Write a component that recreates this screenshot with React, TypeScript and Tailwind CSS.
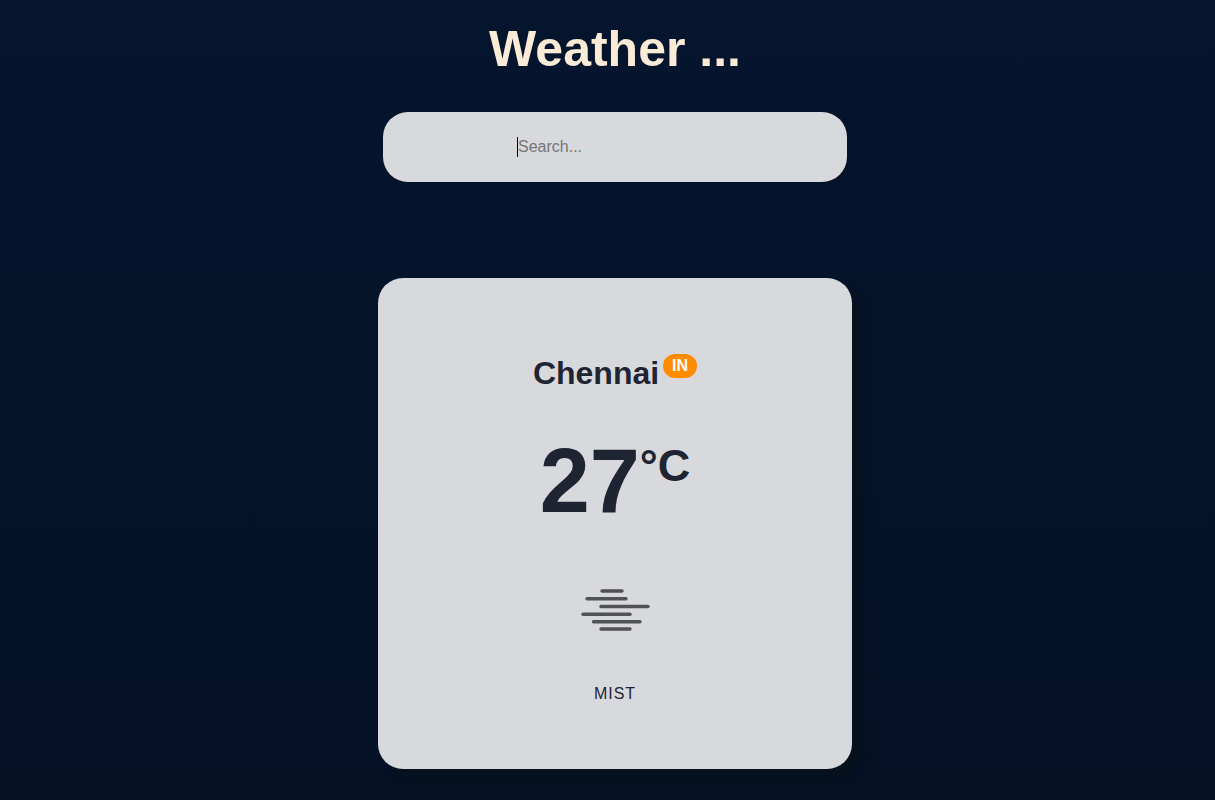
const mistBars = [
  [32, 53, 11],
  [17, 57, 18.8],
  [31, 79, 26.5],
  [13, 61, 34.2],
  [23.5, 71, 41.8],
  [31, 61, 49],
];

function MistIcon() {
  return (
    <svg width="92" height="60" viewBox="0 0 92 60" role="img" aria-label="Mist" className="block">
      {mistBars.map(([x1, x2, y]) => (
        <line key={y} x1={x1 + 1} x2={x2} y1={y} y2={y} stroke="#515256" strokeWidth="3.4" strokeLinecap="round" />
      ))}
    </svg>
  );
}

export default function App() {
  return (
    <div className="min-h-screen bg-linear-to-b from-[#05152e] to-[#051226] pl-[15px] font-['Liberation_Sans',Arial,sans-serif] text-[#1e2432]">
      <main className="flex flex-col items-center pt-[21px] pb-[31px]">
        <h1 className="text-[50px] leading-[56px] font-bold text-[#faebd7]">Weather ...</h1>
        <label className="mt-[35px] flex h-[70px] w-full max-w-[464px] items-center rounded-[25px] bg-[#d8d9dd] pr-6 pl-[134px] shadow-[5px_5px_10px_rgba(0,0,0,0.06)]">
          <span aria-hidden="true" className="h-5 w-px shrink-0 bg-black" />
          <input
            type="text"
            aria-label="Search for a city"
            placeholder="Search..."
            className="w-full min-w-0 bg-transparent text-base outline-none placeholder:text-[#757575]"
          />
        </label>
        <section className="mt-24 flex w-full max-w-[474px] flex-col items-center rounded-[25px] bg-[#d8d9dd] pt-[76px] pb-[63px] shadow-[10px_10px_10px_rgba(8,18,26,0.8)]">
          <h2 className="flex items-start text-[32px] leading-[38px] font-bold">
            <span>Chennai</span>
            <span className="ml-1 rounded-full bg-[#ff8c00] px-[9px] text-base leading-6 text-white">IN</span>
          </h2>
          <p className="mt-[37px] flex items-start text-[90px] leading-[104px] font-bold">
            <span>27</span>
            <span className="text-[45px] leading-[74px]">°C</span>
          </p>
          <div className="mt-[47px]">
            <MistIcon />
          </div>
          <p className="mt-[42px] text-base leading-6 tracking-[1px] uppercase">Mist</p>
        </section>
      </main>
    </div>
  );
}
